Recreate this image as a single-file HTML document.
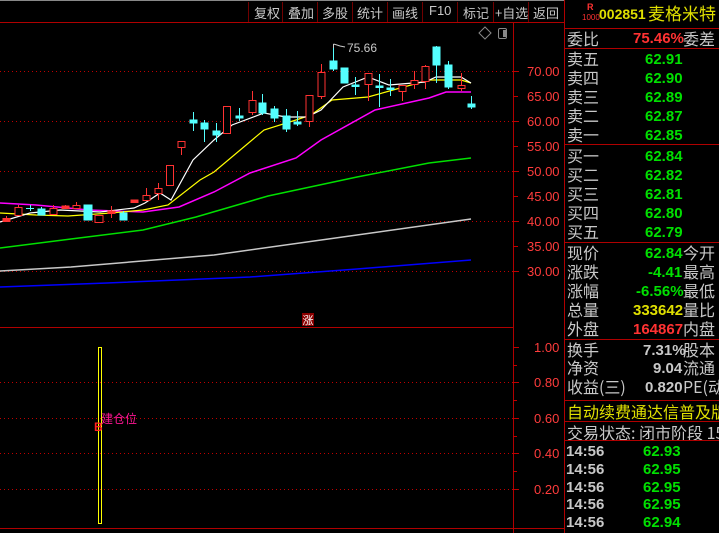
<!DOCTYPE html>
<html><head><meta charset="utf-8"><style>
*{margin:0;padding:0;box-sizing:border-box}
body{width:719px;height:533px;background:#000;overflow:hidden;position:relative;font-family:"Liberation Sans","Noto Sans CJK SC",sans-serif}
.t{position:absolute;white-space:nowrap;line-height:1}
.lb{color:#c8c8c8;font-size:16px;font-family:"Noto Sans CJK SC","WenQuanYi Zen Hei",sans-serif}
.n{font-weight:bold;font-size:15px;font-family:"Liberation Sans",sans-serif}
.g{color:#00e000}.r{color:#ff3232}.y{color:#e0e000}.w{color:#c8c8c8}
.hl{position:absolute;left:564px;width:155px;height:1px;background:#b00000}
.btn{position:absolute;top:3px;color:#c8c8c8;font-size:13px;font-family:"Noto Sans CJK SC",sans-serif}
</style></head><body>
<svg width="719" height="533" style="position:absolute;left:0;top:0" xmlns="http://www.w3.org/2000/svg">
<g stroke="#b00000" stroke-width="1">
<line x1="0" y1="22.5" x2="564" y2="22.5"/>
<line x1="513.5" y1="22" x2="513.5" y2="533"/>
<line x1="0" y1="327.5" x2="513" y2="327.5"/>
<line x1="0" y1="528.5" x2="564" y2="528.5"/>
<line x1="564.5" y1="0" x2="564.5" y2="533"/>
</g>
<g stroke="#700000">
<line x1="248.5" y1="2" x2="248.5" y2="22"/><line x1="282.5" y1="2" x2="282.5" y2="22"/><line x1="317.5" y1="2" x2="317.5" y2="22"/><line x1="352.5" y1="2" x2="352.5" y2="22"/><line x1="387.5" y1="2" x2="387.5" y2="22"/><line x1="422.5" y1="2" x2="422.5" y2="22"/><line x1="457.5" y1="2" x2="457.5" y2="22"/><line x1="493.5" y1="2" x2="493.5" y2="22"/><line x1="528.5" y1="2" x2="528.5" y2="22"/>
</g>
<line x1="0" y1="0.5" x2="564" y2="0.5" stroke="#888"/>
<g stroke="#c00000" stroke-dasharray="1,3">
<line x1="0" y1="71.5" x2="513" y2="71.5"/><line x1="0" y1="121.5" x2="513" y2="121.5"/><line x1="0" y1="171.5" x2="513" y2="171.5"/><line x1="0" y1="221.5" x2="513" y2="221.5"/><line x1="0" y1="271.5" x2="513" y2="271.5"/>
<line x1="0" y1="382.5" x2="513" y2="382.5"/><line x1="0" y1="418.5" x2="513" y2="418.5"/><line x1="0" y1="453.5" x2="513" y2="453.5"/><line x1="0" y1="489.5" x2="513" y2="489.5"/>
</g>
<g stroke="#c00000">
<line x1="513" y1="71.5" x2="519" y2="71.5"/><line x1="513" y1="96.5" x2="518" y2="96.5"/><line x1="513" y1="121.5" x2="519" y2="121.5"/><line x1="513" y1="146.5" x2="518" y2="146.5"/><line x1="513" y1="171.5" x2="519" y2="171.5"/><line x1="513" y1="196.5" x2="518" y2="196.5"/><line x1="513" y1="221.5" x2="519" y2="221.5"/><line x1="513" y1="246.5" x2="518" y2="246.5"/><line x1="513" y1="271.5" x2="519" y2="271.5"/>
<line x1="513" y1="347.5" x2="519" y2="347.5"/><line x1="513" y1="365.5" x2="517" y2="365.5"/><line x1="513" y1="382.5" x2="519" y2="382.5"/><line x1="513" y1="400.5" x2="517" y2="400.5"/><line x1="513" y1="418.5" x2="519" y2="418.5"/><line x1="513" y1="436.5" x2="517" y2="436.5"/><line x1="513" y1="453.5" x2="519" y2="453.5"/><line x1="513" y1="471.5" x2="517" y2="471.5"/><line x1="513" y1="489.5" x2="519" y2="489.5"/>
</g>
<g font-family="Liberation Sans" font-size="13" fill="#ff3c3c">
<text x="527" y="76">70.00</text><text x="527" y="101">65.00</text><text x="527" y="126">60.00</text><text x="527" y="151">55.00</text><text x="527" y="176">50.00</text><text x="527" y="201">45.00</text><text x="527" y="226">40.00</text><text x="527" y="251">35.00</text><text x="527" y="276">30.00</text>
<text x="534" y="352">1.00</text><text x="534" y="387">0.80</text><text x="534" y="423">0.60</text><text x="534" y="458">0.40</text><text x="534" y="494">0.20</text>
</g>
<path d="M485 27 L491 33 L485 39 L479 33 Z" fill="none" stroke="#888"/>
<rect x="498.5" y="28.5" width="8" height="10" rx="1.5" fill="none" stroke="#888"/><rect x="503" y="30" width="3" height="7" fill="#888"/>
<g fill="none" stroke-width="1">
<polyline stroke="#0000ff" stroke-width="1.5" points="0,287 107,283 250,277 357,269 471,260"/>
<polyline stroke="#c8c8c8" stroke-width="1.5" points="0,271 71,267 214,255 357,235 471,219"/>
<polyline stroke="#00e000" stroke-width="1.5" points="0,248 71,239 143,230 196,217 268,196 357,177 429,163 471,158"/>
<polyline stroke="#ff00ff" stroke-width="1.5" points="0,203 36,205 89,210 143,212 179,207 214,192 250,173 296,158 321,140 375,110 429,98 446,92 471,92"/>
<polyline stroke="#ffff00" stroke-width="1.2" points="0,213 36,215 68,216 111,213 143,210 168,205 200,180 214,172 264,130 296,120 311,115 332,100 368,97 393,90 429,80 461,80 471,83"/>
<polyline stroke="#ffffff" stroke-width="1.2" points="0,222 30,213 60,210 100,212 134,208 145,203 160,193 171,200 193,160 214,140 232,125 264,113 286,117 307,117 321,110 343,87 368,77 389,85 425,82 436,77 461,77 471,83"/>
</g>
<g stroke-width="1">
<g stroke="#ff3232" fill="#000">
<line x1="6.5" y1="216" x2="6.5" y2="222"/><rect x="3" y="218.5" width="7" height="3" fill="#ff3232"/>
<line x1="18.5" y1="205" x2="18.5" y2="216"/><rect x="15" y="207.5" width="7" height="8"/>
<line x1="53.5" y1="205" x2="53.5" y2="215"/><rect x="50" y="208.5" width="7" height="6"/>
<line x1="65.5" y1="205" x2="65.5" y2="209"/><rect x="62" y="206" width="7" height="2.5" fill="#ff3232"/>
<line x1="76.5" y1="202" x2="76.5" y2="209"/><rect x="73" y="205.5" width="7" height="3"/>
<rect x="95" y="215.5" width="8" height="7"/>
<line x1="111.5" y1="206" x2="111.5" y2="218"/><rect x="108" y="211" width="7" height="2.5" fill="#ff3232"/>
<rect x="131" y="200" width="7" height="2.5" fill="#ff3232"/>
<line x1="146.5" y1="188" x2="146.5" y2="200"/><rect x="143" y="195.5" width="7" height="5"/>
<line x1="158.5" y1="183" x2="158.5" y2="200"/><rect x="155" y="188.5" width="7" height="5"/>
<rect x="166.5" y="165.5" width="7" height="20"/>
<line x1="181.5" y1="141" x2="181.5" y2="155"/><rect x="178" y="141.5" width="7" height="6"/>
<rect x="223.5" y="106.5" width="7" height="27"/>
<line x1="252.5" y1="91" x2="252.5" y2="115"/><rect x="249" y="100.5" width="7" height="12"/>
<line x1="309.5" y1="95" x2="309.5" y2="127"/><rect x="306" y="95.5" width="7" height="26"/>
<line x1="321.5" y1="64" x2="321.5" y2="99"/><rect x="318" y="72.5" width="7" height="24"/>
<line x1="368.5" y1="73" x2="368.5" y2="101"/><rect x="365" y="73.5" width="7" height="11"/>
<line x1="402.5" y1="85" x2="402.5" y2="101"/><rect x="399" y="85.5" width="7" height="6"/>
<line x1="414.5" y1="71" x2="414.5" y2="89"/><rect x="411" y="80.5" width="7" height="4"/>
<line x1="425.5" y1="65" x2="425.5" y2="89"/><rect x="422" y="66.5" width="7" height="15"/>
<line x1="461.5" y1="73" x2="461.5" y2="91"/><rect x="458" y="85.5" width="7" height="3"/>
</g>
<g stroke="#54ffff" fill="#54ffff">
<line x1="30.5" y1="205" x2="30.5" y2="211"/><line x1="26" y1="208.5" x2="34" y2="208.5"/>
<line x1="41.5" y1="207" x2="41.5" y2="215"/><rect x="38" y="209" width="7" height="6"/>
<rect x="84" y="205" width="8" height="15"/>
<line x1="123.5" y1="211" x2="123.5" y2="220"/><rect x="120" y="213" width="7" height="7"/>
<line x1="193.5" y1="112" x2="193.5" y2="131"/><rect x="190" y="120" width="7" height="3"/>
<line x1="204.5" y1="120" x2="204.5" y2="142"/><rect x="201" y="123" width="7" height="6"/>
<line x1="216.5" y1="123" x2="216.5" y2="142"/><rect x="213" y="131" width="7" height="4"/>
<line x1="239.5" y1="108" x2="239.5" y2="121"/><rect x="236" y="116" width="7" height="2"/>
<line x1="262.5" y1="94" x2="262.5" y2="115"/><rect x="259" y="103" width="7" height="10"/>
<line x1="274.5" y1="106" x2="274.5" y2="122"/><rect x="271" y="109" width="7" height="9"/>
<line x1="286.5" y1="109" x2="286.5" y2="132"/><rect x="283" y="116" width="7" height="13"/>
<line x1="297.5" y1="111" x2="297.5" y2="126"/><rect x="294" y="122" width="7" height="2"/>
<line x1="333.5" y1="44" x2="333.5" y2="71"/><rect x="330" y="61" width="7" height="8"/>
<rect x="341" y="68" width="7" height="15"/>
<line x1="355.5" y1="77" x2="355.5" y2="95"/><rect x="352" y="85" width="7" height="1.5"/>
<line x1="379.5" y1="74" x2="379.5" y2="107"/><rect x="376" y="86" width="7" height="1.5"/>
<line x1="390.5" y1="79" x2="390.5" y2="96"/><rect x="387" y="88" width="7" height="1.5"/>
<line x1="436.5" y1="46" x2="436.5" y2="83"/><rect x="433" y="47" width="7" height="18"/>
<line x1="448.5" y1="61" x2="448.5" y2="89"/><rect x="445" y="65" width="7" height="22"/>
<line x1="471.5" y1="96" x2="471.5" y2="109"/><rect x="468" y="104" width="7" height="3"/>
</g>
</g>
<path d="M333.5 44 L333.5 48 M333.5 44 L337 45 L340 46 L345 47" stroke="#c8c8c8" fill="none"/>
<text x="347" y="52" font-family="Liberation Sans" font-size="12" fill="#c8c8c8">75.66</text>
<rect x="302" y="313" width="12" height="13" fill="#8b0000"/>
<text x="302.5" y="324" font-family="Noto Sans CJK SC" font-size="11" fill="#fff">涨</text>
<rect x="98.5" y="347.5" width="3" height="176" fill="none" stroke="#ffff00"/>
<text x="94" y="431" font-family="Liberation Sans" font-weight="bold" font-size="12" fill="#ff2020">B</text>
<text x="101" y="423" font-family="Noto Sans CJK SC" font-size="12" fill="#ff1493">建仓位</text>
</svg>
<div class="btn" style="left:254px">复权</div><div class="btn" style="left:288px">叠加</div><div class="btn" style="left:322px">多股</div><div class="btn" style="left:357px">统计</div><div class="btn" style="left:392px">画线</div><div class="btn" style="left:429px;font-family:'Liberation Sans'">F10</div><div class="btn" style="left:463px">标记</div><div class="btn" style="left:495px">+自选</div><div class="btn" style="left:533px">返回</div>

<div class="t r" style="left:587px;top:3px;font-size:9px;font-weight:bold">R</div>
<div class="t r" style="left:582px;top:14px;font-size:8px">1000</div>
<div class="t y" style="left:599px;top:7px;font-size:14px;font-weight:bold">002851</div>
<div class="t y" style="left:648px;top:4px;font-size:17px;font-family:'Noto Sans CJK SC',sans-serif">麦格米特</div>
<div class="hl" style="top:28px"></div>
<div class="t lb" style="left:567px;top:30px">委比</div><div class="t n r" style="left:633px;top:31px">75.46%</div><div class="t lb" style="left:683px;top:30px">委差</div>
<div class="hl" style="top:48px"></div>
<div class="t lb" style="left:567px;top:50px">卖五</div><div class="t n g" style="left:645px;top:52px">62.91</div>
<div class="t lb" style="left:567px;top:69px">卖四</div><div class="t n g" style="left:645px;top:71px">62.90</div>
<div class="t lb" style="left:567px;top:88px">卖三</div><div class="t n g" style="left:645px;top:90px">62.89</div>
<div class="t lb" style="left:567px;top:107px">卖二</div><div class="t n g" style="left:645px;top:109px">62.87</div>
<div class="t lb" style="left:567px;top:126px">卖一</div><div class="t n g" style="left:645px;top:128px">62.85</div>
<div class="hl" style="top:144px"></div>
<div class="t lb" style="left:567px;top:147px">买一</div><div class="t n g" style="left:645px;top:149px">62.84</div>
<div class="t lb" style="left:567px;top:166px">买二</div><div class="t n g" style="left:645px;top:168px">62.82</div>
<div class="t lb" style="left:567px;top:185px">买三</div><div class="t n g" style="left:645px;top:187px">62.81</div>
<div class="t lb" style="left:567px;top:204px">买四</div><div class="t n g" style="left:645px;top:206px">62.80</div>
<div class="t lb" style="left:567px;top:223px">买五</div><div class="t n g" style="left:645px;top:225px">62.79</div>
<div class="hl" style="top:242px"></div>
<div class="t lb" style="left:567px;top:244px">现价</div><div class="t n g" style="left:645px;top:246px">62.84</div><div class="t lb" style="left:683px;top:244px">今开</div>
<div class="t lb" style="left:567px;top:263px">涨跌</div><div class="t n g" style="left:648px;top:265px">-4.41</div><div class="t lb" style="left:683px;top:263px">最高</div>
<div class="t lb" style="left:567px;top:282px">涨幅</div><div class="t n g" style="left:636px;top:284px">-6.56%</div><div class="t lb" style="left:683px;top:282px">最低</div>
<div class="t lb" style="left:567px;top:301px">总量</div><div class="t n y" style="left:633px;top:303px">333642</div><div class="t lb" style="left:683px;top:301px">量比</div>
<div class="t lb" style="left:567px;top:320px">外盘</div><div class="t n r" style="left:633px;top:322px">164867</div><div class="t lb" style="left:683px;top:320px">内盘</div>
<div class="hl" style="top:339px"></div>
<div class="t lb" style="left:567px;top:341px">换手</div><div class="t n w" style="left:643px;top:343px">7.31%</div><div class="t lb" style="left:683px;top:341px">股本</div>
<div class="t lb" style="left:567px;top:359px">净资</div><div class="t n w" style="left:653px;top:361px">9.04</div><div class="t lb" style="left:683px;top:359px">流通</div>
<div class="t lb" style="left:567px;top:378px">收益(三)</div><div class="t n w" style="left:645px;top:380px">0.820</div><div class="t lb" style="left:683px;top:378px">PE(动</div>
<div class="hl" style="top:400px"></div>
<div class="t lb y" style="left:567px;top:403px;color:#e0e000">自动续费通达信普及版</div>
<div class="hl" style="top:421px"></div>
<div class="t lb" style="left:567px;top:424px">交易状态: 闭市阶段 15</div>
<div class="hl" style="top:440px"></div>
<div class="t n w" style="left:566px;top:444px">14:56</div><div class="t n g" style="left:643px;top:444px">62.93</div>
<div class="t n w" style="left:566px;top:462px">14:56</div><div class="t n g" style="left:643px;top:462px">62.95</div>
<div class="t n w" style="left:566px;top:480px">14:56</div><div class="t n g" style="left:643px;top:480px">62.95</div>
<div class="t n w" style="left:566px;top:497px">14:56</div><div class="t n g" style="left:643px;top:497px">62.95</div>
<div class="t n w" style="left:566px;top:515px">14:56</div><div class="t n g" style="left:643px;top:515px">62.94</div>
</body></html>
